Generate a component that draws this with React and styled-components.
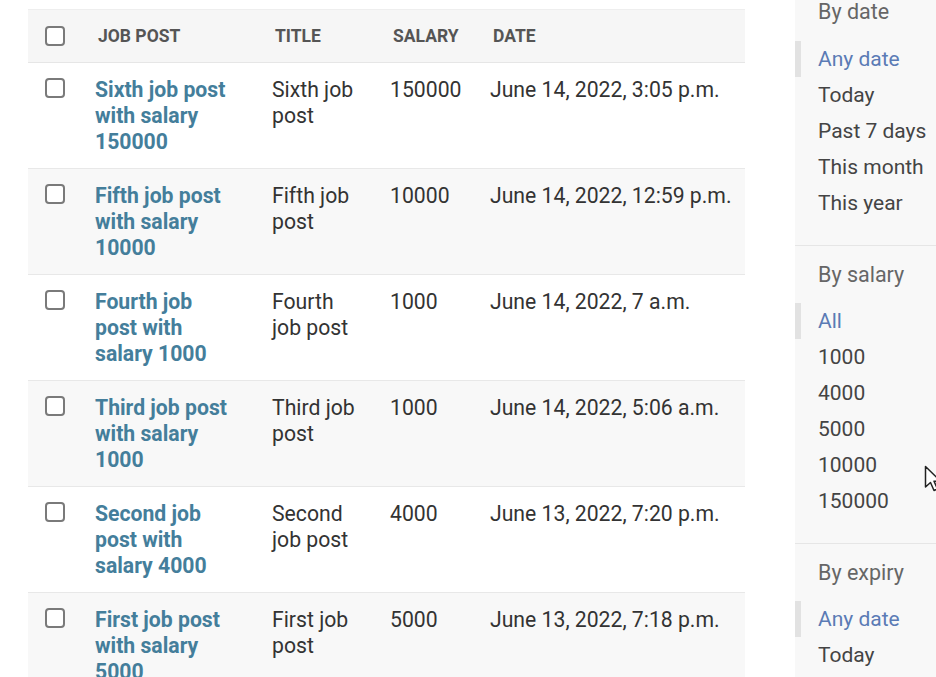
import styled, { createGlobalStyle } from "styled-components";

const GlobalStyle = createGlobalStyle`
  html, body {
    margin: 0;
    padding: 0;
    height: 677px;
    overflow: hidden;
    background: #fff;
    font-family: Roboto, "Liberation Sans", sans-serif;
    color: #333;
  }
`;

const jobs = [
  { name: "Sixth job post with salary 150000", title: "Sixth job post", salary: "150000", date: "June 14, 2022, 3:05 p.m." },
  { name: "Fifth job post with salary 10000", title: "Fifth job post", salary: "10000", date: "June 14, 2022, 12:59 p.m." },
  { name: "Fourth job post with salary 1000", title: "Fourth job post", salary: "1000", date: "June 14, 2022, 7 a.m." },
  { name: "Third job post with salary 1000", title: "Third job post", salary: "1000", date: "June 14, 2022, 5:06 a.m." },
  { name: "Second job post with salary 4000", title: "Second job post", salary: "4000", date: "June 13, 2022, 7:20 p.m." },
  { name: "First job post with salary 5000", title: "First job post", salary: "5000", date: "June 13, 2022, 7:18 p.m." },
];

const filters = [
  { heading: "By date", items: ["Any date", "Today", "Past 7 days", "This month", "This year"] },
  { heading: "By salary", items: ["All", "1000", "4000", "5000", "10000", "150000"] },
  { heading: "By expiry", items: ["Any date", "Today", "Past 7 days"] },
];

export default function App() {
  return (
    <>
      <GlobalStyle />
      <Page>
        <Table>
          <HeadRow>
            <CheckCell $head>
              <Checkbox />
            </CheckCell>
            <HeadCell>Job post</HeadCell>
            <HeadCell>Title</HeadCell>
            <HeadCell>Salary</HeadCell>
            <HeadCell>Date</HeadCell>
          </HeadRow>
          {jobs.map((job, i) => (
            <Row key={job.name} $alt={i % 2 === 1}>
              <CheckCell>
                <Checkbox />
              </CheckCell>
              <LinkCell>
                <JobLink href="#">{job.name}</JobLink>
              </LinkCell>
              <TitleCell>{job.title}</TitleCell>
              <Cell>{job.salary}</Cell>
              <Cell>{job.date}</Cell>
            </Row>
          ))}
        </Table>

        <Sidebar>
          {filters.map((f, i) => (
            <Filter key={f.heading} $first={i === 0}>
              <FilterHeading $first={i === 0}>{f.heading}</FilterHeading>
              <FilterList>
                {f.items.map((item, j) => (
                  <FilterItem key={item} $selected={j === 0}>
                    {item}
                  </FilterItem>
                ))}
              </FilterList>
            </Filter>
          ))}
        </Sidebar>

        <Cursor width="20" height="30" viewBox="0 0 20 30">
          <path
            d="M1.5 1.5 L1.5 22 L6.5 17.5 L10 25.5 L13.5 24 L10 16.2 L16.5 16.2 Z"
            fill="#fff"
            stroke="#222"
            strokeWidth="1.5"
            strokeLinejoin="round"
          />
        </Cursor>
      </Page>
    </>
  );
}

//------ Style ------//
const Page = styled.div`
  position: relative;
  display: flex;
  align-items: flex-start;
  gap: 50px;
  padding-left: 28px;
  height: 677px;
  overflow: hidden;
`;

const Table = styled.div`
  width: 717px;
  flex-shrink: 0;
  margin-top: 9px;
  border-top: 1px solid #eee;
`;

const columns = "67px 177px 118px 100px 1fr";

const HeadRow = styled.div`
  display: grid;
  grid-template-columns: ${columns};
  align-items: center;
  height: 52px;
  background: #f6f6f6;
  border-bottom: 1px solid #e6e6e6;
`;

const HeadCell = styled.div`
  padding-left: 3px;
  font-size: 17.5px;
  font-weight: 700;
  text-transform: uppercase;
  color: #555;
`;

const Row = styled.div`
  display: grid;
  grid-template-columns: ${columns};
  height: 105px;
  background: ${(p) => (p.$alt ? "#f8f8f8" : "#fff")};
  border-bottom: 1px solid #e8e8e8;
  overflow: hidden;
`;

const CheckCell = styled.div`
  padding-left: 17px;
  padding-top: ${(p) => (p.$head ? "0" : "15px")};
  display: flex;
  align-items: ${(p) => (p.$head ? "center" : "flex-start")};
`;

const Checkbox = styled.span`
  display: block;
  width: 16px;
  height: 16px;
  border: 2px solid #7a7a7a;
  border-radius: 4px;
  background: #fff;
`;

const Cell = styled.div`
  padding-top: 14px;
  font-size: 21.2px;
  line-height: 26px;
  color: #333;
`;

const LinkCell = styled(Cell)`
  padding-right: 39px;
`;

const TitleCell = styled(Cell)`
  padding-right: 31px;
`;

const JobLink = styled.a`
  color: #447e9b;
  font-weight: 700;
  text-decoration: none;
`;

const Sidebar = styled.aside`
  flex: 1;
  align-self: stretch;
  background: #f8f8f8;
`;

const Filter = styled.section`
  padding: ${(p) => (p.$first ? "0" : "12px")} 0 24px;
  margin-top: ${(p) => (p.$first ? "-5px" : "0")};
  border-bottom: 1px solid #e6e6e6;
`;

const FilterHeading = styled.h3`
  margin: 0 0 ${(p) => (p.$first ? "12px" : "11px")};
  padding-left: 23px;
  font-size: 21.5px;
  line-height: 34px;
  font-weight: 400;
  color: #666;
`;

const FilterList = styled.ul`
  list-style: none;
  margin: 0;
  padding: 0;
`;

const FilterItem = styled.li`
  padding-left: ${(p) => (p.$selected ? "17px" : "23px")};
  border-left: ${(p) => (p.$selected ? "6px solid #e2e2e2" : "none")};
  font-size: 21px;
  line-height: 36px;
  color: ${(p) => (p.$selected ? "#5b7bb5" : "#444")};
  white-space: nowrap;
`;

const Cursor = styled.svg`
  position: absolute;
  left: 924px;
  top: 465px;
`;
